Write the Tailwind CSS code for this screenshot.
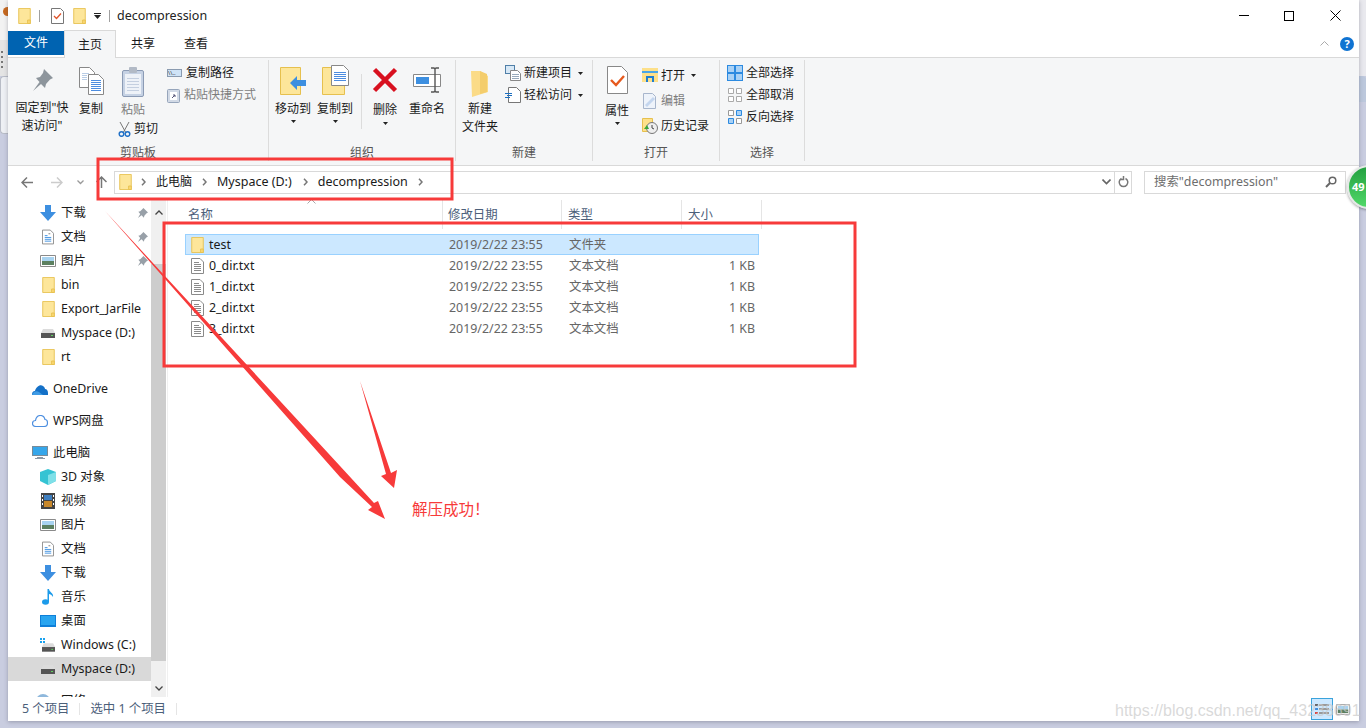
<!DOCTYPE html>
<html lang="zh-CN">
<head>
<meta charset="utf-8">
<title>decompression</title>
<script src="https://cdn.jsdelivr.net/npm/@tailwindcss/browser@4"></script>
</head>
<body class="relative w-[1366px] h-[728px] overflow-hidden bg-[#c9cde0] text-[12.4px] leading-[16px] text-[#1a1a1a] font-['Noto_Sans','Noto_Sans_CJK_SC',sans-serif]">

<!-- icons -->
<svg class="hidden">
  <symbol id="folder" viewBox="0 0 14 18"><path d="M.5.500h13v17H.5z" fill="#fde69a" stroke="#e6c04e"/><path d="M10.500 13.500h3v4h-3z" fill="#fbd873" stroke="#e6c04e"/></symbol>
  <symbol id="txt" viewBox="0 0 13 16"><path d="M.5.500h8.500l3.500 3.500v11.500H.5z" fill="#fff" stroke="#8a8a8a"/><path d="M3 4.500h5M3 6.500h7M3 8.500h7M3 10.500h7M3 12.500h7" stroke="#8a8a8a"/></symbol>
  <symbol id="down" viewBox="0 0 16 16"><path d="M5 0h6v7h5l-8 9-8-9h5z" fill="#3d8fe0"/></symbol>
  <symbol id="pin" viewBox="0 0 12 12"><path d="M7 0l5 5-1.500.8-2.500 2.700-.5 2-2.500-2.500L1 11l2.500-4.500L1.500 4l2-.5L6 1z" fill="#98a0a8"/></symbol>
  <symbol id="doc" viewBox="0 0 13 16"><path d="M.5.500h8.500l3.500 3.500v11.500H.5z" fill="#fff" stroke="#8a8a8a"/><path d="M3 6.500h3M3 8.500h7M3 10.500h7M3 12.500h7" stroke="#3d8fe0"/><path d="M7 4.500h2" stroke="#777"/></symbol>
  <symbol id="pic" viewBox="0 0 16 12"><path d="M.5.500h15v11H.5z" fill="#fff" stroke="#8a8a8a"/><path d="M2 2h12v4H2z" fill="#a8d3f0"/><path d="M2 6h12v4H2z" fill="#5c8060"/></symbol>
  <symbol id="disk" viewBox="0 0 14 9"><path d="M2 0h10l2 4H0z" fill="#dcdcdc"/><path d="M0 4h14v5H0z" fill="#555"/><path d="M10 6h2v1h-2z" fill="#5fd35f"/></symbol>
  <symbol id="tri" viewBox="0 0 7 4"><path d="M0 0h7L3.500 4z" fill="#222"/></symbol>
  <symbol id="crumb" viewBox="0 0 5 8"><path d="M1 .8L4 4 1 7.200" fill="none" stroke="#777" stroke-width="1.500"/></symbol>
</svg>

<!-- bits of the windows behind -->
<div class="absolute left-0 top-0 w-[8px] h-[40px] bg-[#f2f2f2]"></div>
<div class="absolute left-0 top-[40px] w-[8px] h-[36px] bg-[#e4e4e4] flex flex-col items-start gap-[3px] pt-[11px] pl-[1px]">
  <div class="w-[2px] h-[2px] bg-[#777]"></div><div class="w-[2px] h-[2px] bg-[#777]"></div><div class="w-[2px] h-[2px] bg-[#777]"></div><div class="w-[2px] h-[2px] bg-[#777]"></div>
</div>
<div class="absolute left-0 top-[76px] w-[8px] h-[58px] bg-[#eef0f4] border border-r-0 border-[#b8bcc6] rounded-l"></div>
<div class="absolute left-[3px] top-[7px] w-[5px] h-[9px] rounded-l-full bg-[#c8691f]"></div>
<div class="absolute left-[1359px] top-0 w-[7px] h-[76px] bg-[#e9e9ee]"></div>
<div class="absolute left-[1359px] top-[76px] w-[7px] h-[26px] bg-[#bcc8dc] rounded-tr"></div>

<!-- window -->
<div class="absolute left-[8px] top-0 w-[1351px] h-[721px] bg-white flex flex-col shadow-[0_1px_4px_rgba(60,60,80,0.35)]">

  <!-- title bar -->
  <div class="h-[30px] flex items-center shrink-0 pt-[1px]">
    <svg class="ml-[10px] w-[13px] h-[16px]"><use href="#folder"/></svg>
    <div class="ml-[8px] w-px h-[12px] bg-[#a0a0a0]"></div>
    <svg class="ml-[11px] w-[13px] h-[16px]" viewBox="0 0 13 16"><path d="M.5.500h9l3 3v12H.5z" fill="#fff" stroke="#777"/><path d="M3 8l2.500 2.500L10 5.500" fill="none" stroke="#e0552b" stroke-width="1.300"/></svg>
    <svg class="ml-[9px] w-[13px] h-[16px]"><use href="#folder"/></svg>
    <div class="ml-[8px] flex flex-col items-center gap-[1px]"><div class="w-[7px] h-px bg-[#222]"></div><svg class="w-[7px] h-[4px]"><use href="#tri"/></svg></div>
    <div class="ml-[8px] w-px h-[12px] bg-[#a0a0a0]"></div>
    <span class="ml-[7px] text-[12.5px] text-[#222]">decompression</span>
    <div class="ml-auto flex items-center pr-[18px]">
      <div class="w-[10px] h-px bg-black mr-[35px]"></div>
      <div class="w-[10px] h-[10px] border border-black mr-[36px]"></div>
      <svg class="w-[11px] h-[11px]" viewBox="0 0 11 11"><path d="M.5.500l10 10M10.500.500l-10 10" stroke="#000" fill="none"/></svg>
    </div>
  </div>

  <!-- tabs -->
  <div class="h-[28px] flex items-stretch shrink-0 border-b border-[#d9d9d9] relative text-[12px]">
    <div class="w-[56px] h-[24px] mt-px bg-[#0063b1] text-white flex items-center justify-center">文件</div>
    <div class="w-[52px] h-[28px] bg-[#f5f6f7] border-x border-t border-[#d9d9d9] flex items-center justify-center z-10">主页</div>
    <div class="w-[54px] flex items-center justify-center">共享</div>
    <div class="w-[52px] flex items-center justify-center">查看</div>
    <div class="ml-auto flex items-center pr-[5px] gap-[11px]">
      <svg class="w-[9px] h-[5px]" viewBox="0 0 9 5"><path d="M.5 4.500l4-4 4 4" fill="none" stroke="#aaa"/></svg>
      <div class="w-[14px] h-[14px] rounded-full bg-[#0f73d2] text-white text-[11px] leading-[14px] font-bold text-center">?</div>
    </div>
  </div>

  <!-- ribbon -->
  <div class="h-[108px] shrink-0 bg-[#f5f6f7] border-b border-[#d9d9d9] flex pt-[2px] text-[12px]">

    <!-- clipboard -->
    <div class="w-[261px] h-[101px] border-r border-[#dcdcdc] flex flex-col">
      <div class="h-[82px] flex">
        <div class="w-[68px] flex flex-col items-center pt-[9px]">
          <svg class="w-[22px] h-[22px]" viewBox="0 0 22 22"><path d="M13 0l9 9-3 1.500-4 4.500-1 4-4-4-8 7 6.500-9L5 9l4-1 3-4z" fill="#8d959c"/></svg>
          <div class="mt-[8px] text-center leading-[18px] whitespace-nowrap">固定到"快<br>速访问"</div>
        </div>
        <div class="w-[30px] flex flex-col items-center pt-[7px]">
          <svg class="w-[25px] h-[28px]" viewBox="0 0 25 28"><path d="M.500.500h10l5 5v15H.500z" fill="#fff" stroke="#888"/><path d="M9.500 7.500h10l5 5v15h-15z" fill="#fff" stroke="#888"/><path d="M12 13.500h10M12 15.500h10M12 17.500h10M12 19.500h10M12 21.500h10M12 23.500h10" stroke="#4d8de0"/><path d="M3 6.500h7M3 8.500h5M3 10.500h5M3 12.500h5" stroke="#b9cde6"/></svg>
          <div class="mt-[6px]">复制</div>
        </div>
        <div class="w-[44px] flex flex-col items-center pt-[7px] ml-[5px]">
          <svg class="w-[22px] h-[30px]" viewBox="0 0 22 30"><rect x=".5" y="3.500" width="21" height="26" rx="1.500" fill="#c6d2e4" stroke="#8b9bb5"/><rect x="3" y="7" width="16" height="20" fill="#eef2f8"/><path d="M5 11.500h12M5 14.500h12M5 17.500h12M5 20.500h12M5 23.500h12" stroke="#c4cfe0"/><rect x="7" y="0" width="8" height="6" rx="1" fill="#b2bac6"/></svg>
          <div class="mt-[5px] text-[#7d7d7d]">粘贴</div>
          <div class="flex items-center gap-[3px] mt-[3px] ml-[10px] whitespace-nowrap">
            <svg class="w-[13px] h-[15px]" viewBox="0 0 13 15"><path d="M2 0l6 11M11 0L5 11" stroke="#777" fill="none"/><circle cx="3.500" cy="12" r="2.300" fill="none" stroke="#2271c7" stroke-width="1.500"/><circle cx="9.500" cy="12" r="2.300" fill="none" stroke="#2271c7" stroke-width="1.500"/></svg>
            <span>剪切</span>
          </div>
        </div>
        <div class="flex flex-col gap-[6px] pt-[5px] ml-[12px]">
          <div class="flex items-center gap-[4px] h-[16px] whitespace-nowrap">
            <div class="w-[15px] h-[8px] bg-[#cfe3f6] border border-[#8a9bb0] text-[6px] leading-[6px] text-[#333] overflow-hidden">\\..</div>
            <span>复制路径</span>
          </div>
          <div class="flex items-center gap-[4px] h-[16px] whitespace-nowrap text-[#7d7d7d]">
            <svg class="w-[13px] h-[15px]" viewBox="0 0 13 15"><rect x=".5" y="1.500" width="12" height="13" rx="1" fill="#d2dae6" stroke="#96a5bb"/><rect x="3" y="4" width="7" height="8" fill="#fff"/><path d="M5 10l3-3M6 7h2v2" stroke="#557" fill="none"/></svg>
            <span>粘贴快捷方式</span>
          </div>
        </div>
      </div>
      <div class="text-center text-[#555] mt-[5px]">剪贴板</div>
    </div>

    <!-- organise -->
    <div class="w-[187px] h-[101px] border-r border-[#dcdcdc] flex flex-col">
      <div class="h-[82px] flex">
        <div class="w-[42px] ml-[3px] flex flex-col items-center pt-[7px]">
          <svg class="w-[26px] h-[28px]" viewBox="0 0 26 28"><path d="M.500.500h20v27H.500z" fill="#fde69a" stroke="#e6c04e"/><path d="M10 16l7-7v4h9v6h-9v4z" fill="#3d8fe0"/></svg>
          <div class="mt-[6px] whitespace-nowrap">移动到</div>
          <svg class="w-[5px] h-[3px] mt-[3px]"><use href="#tri"/></svg>
        </div>
        <div class="w-[42px] flex flex-col items-center pt-[5px]">
          <svg class="w-[27px] h-[30px]" viewBox="0 0 27 30"><path d="M.500 2.500h22v27H.500z" fill="#fde69a" stroke="#e6c04e"/><path d="M9.500.500h12l5 5v15h-17z" fill="#fff" stroke="#888"/><path d="M12 7.500h12M12 9.500h12M12 11.500h12M12 13.500h12M12 15.500h12" stroke="#4d8de0"/></svg>
          <div class="mt-[6px] whitespace-nowrap">复制到</div>
          <svg class="w-[5px] h-[3px] mt-[3px]"><use href="#tri"/></svg>
        </div>
        <div class="w-px h-[55px] bg-[#dcdcdc] mt-[14px] ml-[5px]"></div>
        <div class="w-[40px] ml-[3px] flex flex-col items-center pt-[7px]">
          <svg class="w-[26px] h-[26px]" viewBox="0 0 26 26"><path d="M2.500 2.500l21 21M23.500 2.500l-21 21" stroke="#d8101f" stroke-width="4.500"/></svg>
          <div class="mt-[9px]">删除</div>
          <svg class="w-[5px] h-[3px] mt-[4px]"><use href="#tri"/></svg>
        </div>
        <div class="w-[44px] flex flex-col items-center pt-[7px]">
          <svg class="w-[28px] h-[26px]" viewBox="0 0 28 26"><path d="M.500 7.500h27v12H.500z" fill="#fff" stroke="#888"/><path d="M3 10h13v7H3z" fill="#3d8fe0"/><path d="M18 1h3l1 1 1-1h3M22 2v22M18 25h3l1-1 1 1h3" stroke="#555" fill="none" stroke-width="1.400"/></svg>
          <div class="mt-[8px] whitespace-nowrap">重命名</div>
        </div>
      </div>
      <div class="text-center text-[#555] mt-[5px]">组织</div>
    </div>

    <!-- new -->
    <div class="w-[137px] h-[101px] border-r border-[#dcdcdc] flex flex-col">
      <div class="h-[82px] flex">
        <div class="w-[48px] flex flex-col items-center pt-[9px]">
          <svg class="w-[20px] h-[28px]" viewBox="0 0 20 28"><path d="M1 2h9l8 5v16l-16 5z" fill="#fbdb87"/><path d="M10 2l7 3v18l-7 2z" fill="#f4cd6c"/></svg>
          <div class="mt-[3px] text-center leading-[18px] whitespace-nowrap">新建<br>文件夹</div>
        </div>
        <div class="flex flex-col gap-[6px] pt-[5px] ml-[1px]">
          <div class="flex items-center gap-[3px] h-[16px] whitespace-nowrap">
            <svg class="w-[16px] h-[16px]" viewBox="0 0 16 16"><rect x=".5" y=".5" width="9" height="8" fill="#d7e8f6" stroke="#4f7fa8"/><path d="M5.500 5.500h7l3 3v7h-10z" fill="#fff" stroke="#888"/><path d="M7 9.500h7M7 11.500h7M7 13.500h7" stroke="#9ab"/></svg>
            <span>新建项目</span>
            <svg class="w-[5px] h-[3px] ml-[3px]"><use href="#tri"/></svg>
          </div>
          <div class="flex items-center gap-[3px] h-[16px] whitespace-nowrap">
            <svg class="w-[16px] h-[16px]" viewBox="0 0 16 16"><path d="M3.500.500h8l4 4v11h-12z" fill="#fff" stroke="#777"/><path d="M0 6.500h7M2 8.500h5M0 10.500h5" stroke="#1c6fc0" stroke-width="1"/></svg>
            <span>轻松访问</span>
            <svg class="w-[5px] h-[3px] ml-[3px]"><use href="#tri"/></svg>
          </div>
        </div>
      </div>
      <div class="text-center text-[#555] mt-[5px]">新建</div>
    </div>

    <!-- open -->
    <div class="w-[127px] h-[101px] border-r border-[#dcdcdc] flex flex-col">
      <div class="h-[82px] flex">
        <div class="w-[48px] flex flex-col items-center pt-[6px]">
          <svg class="w-[21px] h-[28px]" viewBox="0 0 21 28"><path d="M.500.500h14l6 6v21H.500z" fill="#fff" stroke="#888"/><path d="M4 14l5 5 8-9" fill="none" stroke="#e65a1e" stroke-width="2.400"/></svg>
          <div class="mt-[9px]">属性</div>
          <svg class="w-[5px] h-[3px] mt-[3px]"><use href="#tri"/></svg>
        </div>
        <div class="flex flex-col pt-[3px] ml-[1px]">
          <div class="flex items-center gap-[3px] h-[25px] whitespace-nowrap">
            <svg class="w-[16px] h-[15px]" viewBox="0 0 16 15"><path d="M0 0h16v14H0z" fill="#fde08a"/><path d="M0 3h16v2H0z" fill="#49a6e8"/><path d="M4 14V8h8v6h-2v-4H6v4z" fill="#1f7ed0"/></svg>
            <span>打开</span>
            <svg class="w-[5px] h-[3px] ml-[3px]"><use href="#tri"/></svg>
          </div>
          <div class="flex items-center gap-[3px] h-[25px] whitespace-nowrap text-[#7d7d7d]">
            <svg class="w-[16px] h-[16px]" viewBox="0 0 16 16"><path d="M1.500.500h9l3 3v12h-12z" fill="#eef3fa" stroke="#a8b6cc"/><path d="M3 12L11 4l2 2-8 8z" fill="#c4d6ee"/></svg>
            <span>编辑</span>
          </div>
          <div class="flex items-center gap-[3px] h-[25px] whitespace-nowrap">
            <svg class="w-[16px] h-[16px]" viewBox="0 0 16 16"><path d="M.500.500h10v13H.500z" fill="#fde08a" stroke="#e6c04e"/><circle cx="10" cy="10" r="5.500" fill="#eee" stroke="#777"/><path d="M10 7v3l2 1" stroke="#444" fill="none"/><path d="M2 11l3-4 2 4z" fill="#3aa63a"/></svg>
            <span>历史记录</span>
          </div>
        </div>
      </div>
      <div class="text-center text-[#555] mt-[5px]">打开</div>
    </div>

    <!-- select -->
    <div class="w-[85px] h-[101px] border-r border-[#dcdcdc] flex flex-col">
      <div class="h-[82px] flex flex-col pl-[7px] pt-[2px]">
        <div class="flex items-center gap-[3px] h-[22px] whitespace-nowrap">
          <svg class="w-[16px] h-[16px]" viewBox="0 0 16 16"><rect x=".5" y=".5" width="15" height="15" fill="#a9d1f5" stroke="#2c8ae0"/><path d="M7.500 0v16M8.500 0v16M0 7.500h16M0 8.500h16" stroke="#2c8ae0"/></svg>
          <span>全部选择</span>
        </div>
        <div class="flex items-center gap-[3px] h-[22px] whitespace-nowrap">
          <svg class="w-[16px] h-[16px]" viewBox="0 0 16 16"><path d="M1.500 1.500h5v5h-5zM9.500 1.500h5v5h-5zM1.500 9.500h5v5h-5zM9.500 9.500h5v5h-5z" fill="#fff" stroke="#aaa"/></svg>
          <span>全部取消</span>
        </div>
        <div class="flex items-center gap-[3px] h-[22px] whitespace-nowrap">
          <svg class="w-[16px] h-[16px]" viewBox="0 0 16 16"><path d="M1.500 1.500h5v5h-5zM9.500 9.500h5v5h-5z" fill="#fff" stroke="#999"/><path d="M9.500 1.500h5v5h-5zM1.500 9.500h5v5h-5z" fill="#a9d1f5" stroke="#2c8ae0"/></svg>
          <span>反向选择</span>
        </div>
      </div>
      <div class="text-center text-[#555] mt-[5px]">选择</div>
    </div>
  </div>

  <!-- address bar -->
  <div class="h-[32px] shrink-0 flex items-center">
    <svg class="ml-[13px] w-[12px] h-[11px]" viewBox="0 0 12 11"><path d="M6 .5L1 5.500l5 5M1 5.500h11" fill="none" stroke="#777" stroke-width="1.500"/></svg>
    <svg class="ml-[18px] w-[12px] h-[11px]" viewBox="0 0 12 11"><path d="M6 .5l5 5-5 5M11 5.500H0" fill="none" stroke="#ccc" stroke-width="1.500"/></svg>
    <svg class="ml-[14px] w-[7px] h-[5px]" viewBox="0 0 7 5"><path d="M.5.500l3 3 3-3" fill="none" stroke="#999" stroke-width="1.300"/></svg>
    <svg class="ml-[12px] w-[11px] h-[12px]" viewBox="0 0 11 12"><path d="M.5 6l5-5 5 5M5.500 1v11" fill="none" stroke="#777" stroke-width="1.500"/></svg>
    <div class="ml-[7px] w-[1001px] h-[23px] border border-[#d9d9d9] flex items-center text-[12.5px]">
      <svg class="ml-[4px] w-[13px] h-[16px]"><use href="#folder"/></svg>
      <svg class="ml-[9px] w-[5px] h-[8px]"><use href="#crumb"/></svg>
      <span class="ml-[10px] text-[12px]">此电脑</span>
      <svg class="ml-[10px] w-[5px] h-[8px]"><use href="#crumb"/></svg>
      <span class="ml-[10px]">Myspace (D:)</span>
      <svg class="ml-[11px] w-[5px] h-[8px]"><use href="#crumb"/></svg>
      <span class="ml-[10px]">decompression</span>
      <svg class="ml-[10px] w-[5px] h-[8px]"><use href="#crumb"/></svg>
      <svg class="ml-auto mr-[3px] w-[9px] h-[6px]" viewBox="0 0 9 6"><path d="M.5.500l4 4 4-4" fill="none" stroke="#666" stroke-width="1.600"/></svg>
    </div>
    <div class="w-[17px] h-[23px] border border-l-0 border-[#d9d9d9] flex items-center justify-center">
      <svg class="w-[11px] h-[12px]" viewBox="0 0 11 12"><path d="M3.500 2.500a4.300 4.300 0 1 0 4 0M5.500 0v3.500H2" fill="none" stroke="#777" stroke-width="1.500"/></svg>
    </div>
    <div class="ml-[12px] w-[202px] h-[23px] border border-[#d9d9d9] flex items-center text-[#6d6d6d] pl-[9px]">
      <span>搜索"decompression"</span>
      <svg class="ml-auto mr-[8px] w-[12px] h-[12px]" viewBox="0 0 12 12"><circle cx="7.500" cy="4.500" r="3.300" fill="none" stroke="#666" stroke-width="1.500"/><path d="M5 7l-4 4" stroke="#666" stroke-width="2"/></svg>
    </div>
  </div>

  <!-- main area -->
  <div class="flex-1 flex min-h-0">
    <!-- nav pane -->
    <div class="w-[143px] shrink-0 overflow-hidden pt-[3px]">
      <div class="flex items-center h-[24px] pl-[32px]"><svg class="w-[16px] h-[16px]"><use href="#down"/></svg><span class="ml-[5px]">下载</span><svg class="ml-auto mr-[3px] w-[11px] h-[11px]"><use href="#pin"/></svg></div>
      <div class="flex items-center h-[24px] pl-[34px]"><svg class="w-[12px] h-[16px]"><use href="#doc"/></svg><span class="ml-[7px]">文档</span><svg class="ml-auto mr-[3px] w-[11px] h-[11px]"><use href="#pin"/></svg></div>
      <div class="flex items-center h-[24px] pl-[32px]"><svg class="w-[16px] h-[12px]"><use href="#pic"/></svg><span class="ml-[5px]">图片</span><svg class="ml-auto mr-[3px] w-[11px] h-[11px]"><use href="#pin"/></svg></div>
      <div class="flex items-center h-[24px] pl-[34px]"><svg class="w-[13px] h-[16px]"><use href="#folder"/></svg><span class="ml-[6px]">bin</span></div>
      <div class="flex items-center h-[24px] pl-[34px]"><svg class="w-[13px] h-[16px]"><use href="#folder"/></svg><span class="ml-[6px] whitespace-nowrap">Export_JarFile</span></div>
      <div class="flex items-center h-[24px] pl-[33px]"><svg class="w-[14px] h-[9px]"><use href="#disk"/></svg><span class="ml-[6px] whitespace-nowrap">Myspace (D:)</span></div>
      <div class="flex items-center h-[24px] pl-[34px]"><svg class="w-[13px] h-[16px]"><use href="#folder"/></svg><span class="ml-[6px]">rt</span></div>

      <div class="flex items-center h-[24px] pl-[24px] mt-[8px]">
        <svg class="w-[16px] h-[11px]" viewBox="0 0 16 11"><path d="M0 11c0-3 1-4 3-4 1-4 5-7 8-5 2 1 2 3 2 3 2 0 3 2 3 4v2z" fill="#1470c7"/><path d="M0 11c1-3 4-5 7-3l4 3z" fill="#3f9be5"/></svg>
        <span class="ml-[5px]">OneDrive</span>
      </div>
      <div class="flex items-center h-[24px] pl-[24px] mt-[8px]">
        <svg class="w-[16px] h-[12px]" viewBox="0 0 16 12"><path d="M4 11.500c-2 0-3.500-1-3.500-3S2 5.500 3.500 5.500C4 2.500 6 .5 8.500.5s4 2 4.500 4c1.500 0 2.500 1.500 2.500 3.500s-1.500 3.500-3.500 3.500z" fill="#fff" stroke="#4d8fe0" stroke-width="1.200"/></svg>
        <span class="ml-[5px]">WPS网盘</span>
      </div>
      <div class="flex items-center h-[24px] pl-[24px] mt-[8px]">
        <svg class="w-[16px] h-[14px]" viewBox="0 0 16 14"><path d="M0 0h16v10H0z" fill="#35a6ea"/><path d="M.5.500h15v9H.5z" fill="none" stroke="#7a8a96"/><path d="M5 11h6v1h2v1H3v-1h2z" fill="#8a98a5"/></svg>
        <span class="ml-[5px]">此电脑</span>
      </div>
      <div class="flex items-center h-[24px] pl-[32px]">
        <svg class="w-[16px] h-[16px]" viewBox="0 0 16 16"><path d="M8 0l8 3v9l-8 4-8-4V3z" fill="#35c3d3"/><path d="M8 6l8-3v9l-8 4z" fill="#7fe0e8"/></svg>
        <span class="ml-[5px] whitespace-nowrap">3D 对象</span>
      </div>
      <div class="flex items-center h-[24px] pl-[33px]">
        <svg class="w-[14px] h-[16px]" viewBox="0 0 14 16"><path d="M0 0h14v16H0z" fill="#444"/><path d="M3 2h8v5H3z" fill="#3f7fc0"/><path d="M3 8h8v6H3z" fill="#c9882a"/><path d="M1 2h1v2H1zM1 6h1v2H1zM1 10h1v2H1zM12 2h1v2h-1zM12 6h1v2h-1zM12 10h1v2h-1z" fill="#fff"/></svg>
        <span class="ml-[6px]">视频</span>
      </div>
      <div class="flex items-center h-[24px] pl-[32px]"><svg class="w-[16px] h-[12px]"><use href="#pic"/></svg><span class="ml-[5px]">图片</span></div>
      <div class="flex items-center h-[24px] pl-[34px]"><svg class="w-[12px] h-[16px]"><use href="#doc"/></svg><span class="ml-[7px]">文档</span></div>
      <div class="flex items-center h-[24px] pl-[32px]"><svg class="w-[16px] h-[16px]"><use href="#down"/></svg><span class="ml-[5px]">下载</span></div>
      <div class="flex items-center h-[24px] pl-[34px]">
        <svg class="w-[12px] h-[16px]" viewBox="0 0 12 16"><ellipse cx="3.500" cy="13" rx="3.500" ry="2.800" fill="#1c9bea"/><path d="M5.500 13V0h1.500c0 3 5 4 4 8-1-2-3-3-4-3v8z" fill="#1c9bea"/></svg>
        <span class="ml-[7px]">音乐</span>
      </div>
      <div class="flex items-center h-[24px] pl-[32px]">
        <svg class="w-[16px] h-[12px]" viewBox="0 0 16 12"><path d="M0 0h16v12H0z" fill="#0f7fd8"/><path d="M1 1h14v9H1z" fill="#29a5f0"/></svg>
        <span class="ml-[5px]">桌面</span>
      </div>
      <div class="flex items-center h-[24px] pl-[32px]">
        <div class="relative w-[15px] h-[14px]">
          <svg class="absolute right-0 bottom-0 w-[13px] h-[9px]"><use href="#disk"/></svg>
          <div class="absolute left-0 top-0 grid grid-cols-2 gap-px"><div class="w-[2px] h-[2px] bg-[#1aa2ef]"></div><div class="w-[2px] h-[2px] bg-[#1aa2ef]"></div><div class="w-[2px] h-[2px] bg-[#1aa2ef]"></div><div class="w-[2px] h-[2px] bg-[#1aa2ef]"></div></div>
        </div>
        <span class="ml-[6px] whitespace-nowrap">Windows (C:)</span>
      </div>
      <div class="flex items-center h-[24px] pl-[33px] bg-[#d9d9d9]"><svg class="w-[14px] h-[9px]"><use href="#disk"/></svg><span class="ml-[6px] whitespace-nowrap">Myspace (D:)</span></div>
      <div class="flex items-center h-[24px] pl-[28px] mt-[8px]"><div class="w-[14px] h-[14px] rounded-full bg-[#8fb8dc]"></div><span class="ml-[11px]">网络</span></div>
    </div>

    <!-- nav scrollbar -->
    <div class="w-[15px] shrink-0 bg-[#f0f0f0] flex flex-col items-center">
      <svg class="mt-[12px] w-[8px] h-[5px]" viewBox="0 0 8 5"><path d="M.5 4.500L4 1l3.500 3.500" fill="none" stroke="#444" stroke-width="1.300"/></svg>
      <div class="mt-[49px] w-full h-[397px] bg-[#cdcdcd]"></div>
      <svg class="mt-[25px] w-[8px] h-[5px]" viewBox="0 0 8 5"><path d="M.5.500L4 4 7.500.500" fill="none" stroke="#444" stroke-width="1.300"/></svg>
    </div>
    <div class="w-px shrink-0 bg-[#f0f0f0] ml-px"></div>

    <!-- file list -->
    <div class="flex-1 relative">
      <div class="absolute left-[139px] top-[1px] w-[9px] h-[5px]"><svg class="w-[9px] h-[5px]" viewBox="0 0 9 5"><path d="M.5 4.500l4-4 4 4" fill="none" stroke="#aaa"/></svg></div>
      <div class="flex h-[31px] ml-[17px] text-[#4c607a] items-center pt-[2px]">
        <div class="w-[258px] h-full flex items-center pl-[3px] border-r border-[#e5e5e5]">名称</div>
        <div class="w-[119px] h-full flex items-center pl-[5px] border-r border-[#e5e5e5]">修改日期</div>
        <div class="w-[120px] h-full flex items-center pl-[6px] border-r border-[#e5e5e5]">类型</div>
        <div class="w-[80px] h-full flex items-center pl-[6px] border-r border-[#e5e5e5]">大小</div>
      </div>
      <div class="ml-[17px] w-[574px] mt-[5px] text-[#666]">
        <div class="flex items-center h-[21px] bg-[#cce8ff] border border-[#99d1ff]">
          <svg class="ml-[5px] w-[13px] h-[16px]"><use href="#folder"/></svg>
          <span class="ml-[5px] w-[240px] text-[#1a1a1a]">test</span>
          <span class="w-[120px]">2019/2/22 23:55</span><span class="w-[120px]">文件夹</span>
        </div>
        <div class="flex items-center h-[21px] px-px">
          <svg class="ml-[5px] w-[13px] h-[16px]"><use href="#txt"/></svg>
          <span class="ml-[5px] w-[240px] text-[#1a1a1a]">0_dir.txt</span>
          <span class="w-[120px]">2019/2/22 23:55</span><span class="w-[120px]">文本文档</span><span class="w-[66px] text-right">1 KB</span>
        </div>
        <div class="flex items-center h-[21px] px-px">
          <svg class="ml-[5px] w-[13px] h-[16px]"><use href="#txt"/></svg>
          <span class="ml-[5px] w-[240px] text-[#1a1a1a]">1_dir.txt</span>
          <span class="w-[120px]">2019/2/22 23:55</span><span class="w-[120px]">文本文档</span><span class="w-[66px] text-right">1 KB</span>
        </div>
        <div class="flex items-center h-[21px] px-px">
          <svg class="ml-[5px] w-[13px] h-[16px]"><use href="#txt"/></svg>
          <span class="ml-[5px] w-[240px] text-[#1a1a1a]">2_dir.txt</span>
          <span class="w-[120px]">2019/2/22 23:55</span><span class="w-[120px]">文本文档</span><span class="w-[66px] text-right">1 KB</span>
        </div>
        <div class="flex items-center h-[21px] px-px">
          <svg class="ml-[5px] w-[13px] h-[16px]"><use href="#txt"/></svg>
          <span class="ml-[5px] w-[240px] text-[#1a1a1a]">3_dir.txt</span>
          <span class="w-[120px]">2019/2/22 23:55</span><span class="w-[120px]">文本文档</span><span class="w-[66px] text-right">1 KB</span>
        </div>
      </div>
    </div>
  </div>

  <!-- status bar -->
  <div class="h-[24px] shrink-0 flex items-center text-[#4c607a] bg-white">
    <span class="ml-[14px]">5 个项目</span>
    <div class="ml-[10px] w-px h-[12px] bg-[#e5e5e5]"></div>
    <span class="ml-[10px]">选中 1 个项目</span>
    <div class="ml-[10px] w-px h-[12px] bg-[#e5e5e5]"></div>
    <div class="ml-auto mr-[9px] flex items-center gap-[3px]">
      <div class="w-[22px] h-[22px] bg-[#cce8ff] border border-[#3aa3dc] flex flex-col justify-center gap-[2px] px-[3px]">
        <div class="h-[2px] flex gap-[1px]"><div class="w-[3px] bg-[#666]"></div><div class="flex-1 bg-[#999]"></div></div>
        <div class="h-[2px] flex gap-[1px]"><div class="w-[3px] bg-[#3d8fe0]"></div><div class="flex-1 bg-[#999]"></div></div>
        <div class="h-[2px] flex gap-[1px]"><div class="w-[3px] bg-[#d84a3a]"></div><div class="flex-1 bg-[#999]"></div></div>
      </div>
      <svg class="w-[14px] h-[11px]"><use href="#pic"/></svg>
    </div>
  </div>
</div>

<!-- green badge from the floating widget -->
<div class="absolute left-[1347px] top-[165px] w-[44px] h-[44px] rounded-full bg-gradient-to-b from-[#22a040] to-[#50d868] border-2 border-[#e4e8e6] shadow-[0_1px_3px_rgba(0,0,0,0.4)] text-white font-bold text-[11px] leading-[40px] pl-[3px]">49</div>

<!-- red annotations drawn over the screenshot -->
<svg class="absolute left-0 top-0 w-[1366px] h-[728px] pointer-events-none" viewBox="0 0 1366 728">
  <rect x="98" y="159" width="354" height="40" fill="none" stroke="#f73a3a" stroke-width="3"/>
  <rect x="164" y="223" width="691" height="143" fill="none" stroke="#f73a3a" stroke-width="3"/>
  <path d="M105 211L340 466 374 503 378 501 385 519 368 510 372 507 340 477Z" fill="#f73a3a"/>
  <path d="M360 381L391 473 397 470 394 488 381 476 386 474Z" fill="#f73a3a"/>
</svg>
<div class="absolute left-[412px] top-[499px] text-[15.5px] leading-[18px] text-[#f73a3a] font-['Noto_Sans_CJK_SC','Noto_Sans',sans-serif]">解压成功！</div>

<!-- blog watermark -->
<div class="absolute left-[1115px] top-[699px] text-[16px] leading-[24px] text-[#c9c9c9]/70 whitespace-nowrap font-['Liberation_Sans',sans-serif]">https://blog.csdn.net/qq_43238691</div>
</body>
</html>
